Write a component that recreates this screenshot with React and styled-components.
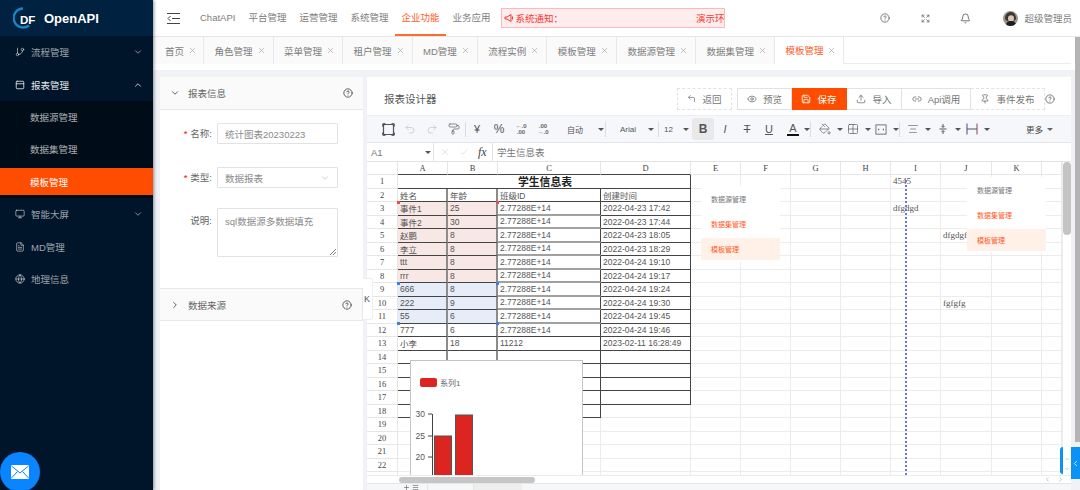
import React from 'react';
import styled, { createGlobalStyle } from 'styled-components';
import {
  GitBranch, PanelTop, ChevronDown, ChevronUp, ChevronRight, Monitor, FileText, Globe, CircleHelp, Expand, Bell,
  X, Check, Eye, Save, Upload, Link2, Pin, CornerUpLeft, Undo2, Redo2, PaintRoller,
  PaintBucket, Grid2x2, AlignCenter, Plus, Menu, ChevronLeft,
} from 'lucide-react';

const GlobalStyle = createGlobalStyle`
  html, body { margin: 0; padding: 0; height: 100%; overflow: hidden; }
  body { font-family: "Liberation Sans", "Noto Sans CJK SC", sans-serif; background: #fff; color: #666; }
  * { box-sizing: border-box; }
`;

const Page = styled.div`
  position: relative;
  display: flex;
  width: 1080px;
  height: 490px;
  overflow: hidden;
`;

/* sidebar */
const Sidebar = styled.aside`
  flex: 0 0 153px;
  background: #001529;
  box-shadow: 1px 0 3px rgba(0, 21, 41, 0.45);
  z-index: 2;
`;

const Brand = styled.div`
  display: flex;
  align-items: center;
  height: 36px;
  padding-left: 13px;
  background: #002140;
  color: #fff;
  font-size: 13px;
  font-weight: 700;
`;

const NavItem = styled.div`
  display: flex;
  align-items: center;
  gap: 6px;
  height: 32.5px;
  padding: 0 10px 0 15px;
  font-size: 9.5px;
  color: ${(p) => (p.$open ? '#e4e7ea' : 'rgba(255,255,255,.62)')};
  svg:last-child:not(:first-child) { margin-left: auto; }
`;

const SubMenu = styled.div`
  background: #000c17;
  padding-bottom: 3px;
`;

const SubItem = styled.div`
  display: flex;
  align-items: center;
  height: ${(p) => (p.$active ? '27px' : '32px')};
  margin-top: ${(p) => (p.$active ? '3px' : '0')};
  padding-left: 30px;
  font-size: 9.5px;
  color: ${(p) => (p.$active ? '#fff' : 'rgba(255,255,255,.68)')};
  background: ${(p) => (p.$active ? '#ff4d00' : 'transparent')};
`;

const Fab = styled.div`
  position: absolute;
  left: 0;
  top: 452px;
  display: flex;
  align-items: center;
  justify-content: center;
  width: 40px;
  height: 40px;
  border-radius: 50%;
  background: #0a84ff;
  z-index: 5;
`;

/* main column */
const Main = styled.div`
  flex: 1;
  display: flex;
  flex-direction: column;
  min-width: 0;
`;

const TopBar = styled.header`
  display: flex;
  align-items: center;
  height: 37px;
  padding-left: 14px;
  border-bottom: 1px solid #e6e6e6;
  background: #fff;
  font-size: 9.5px;
`;

const TopLink = styled.div`
  display: flex;
  align-items: center;
  height: 36px;
  padding: 0 6.5px;
  color: ${(p) => (p.$active ? '#ff5a1f' : '#7d7d7d')};
  border-bottom: 2px solid ${(p) => (p.$active ? '#ff6a33' : 'transparent')};
`;

const TopLinks = styled.nav`
  display: flex;
  margin-left: 13.5px;
`;

const Notice = styled.div`
  display: flex;
  align-items: center;
  justify-content: space-between;
  width: 224px;
  height: 20px;
  margin-left: 4.5px;
  padding: 0 0 0 2px;
  border: 1px solid #ffb8b8;
  background: #ffecec;
  color: #f5372f;
  overflow: hidden;
  white-space: nowrap;
`;

const NoticeText = styled.span`
  display: flex;
  align-items: center;
  gap: 1px;
`;

const TopRight = styled.div`
  display: flex;
  align-items: center;
  margin-left: auto;
  color: #666;
`;

const TopIcon = styled.span`
  display: flex;
  justify-content: center;
  width: ${(p) => p.$w}px;
  margin-left: ${(p) => p.$ml || 0}px;
`;

const UserName = styled.span`
  margin-left: 6px;
  margin-right: 8px;
  color: #7d7d7d;
  font-size: 9.5px;
`;

const TabBar = styled.div`
  display: flex;
  height: 27px;
  padding-right: 9px;
  background: #fff;
`;

const TabsRow = styled.div`
  display: flex;
  flex: 1;
  border-bottom: 1px solid #ececec;
`;

const Tab = styled.div`
  display: flex;
  align-items: center;
  gap: 4px;
  height: 27px;
  padding: 0 7px 0 10.5px;
  font-size: 9.5px;
  white-space: nowrap;
  color: ${(p) => (p.$active ? '#ff5a1f' : '#7d7d7d')};
  background: ${(p) => (p.$active ? '#fff' : '#fafafa')};
  border-right: 1px solid #e8e8e8;
  border-bottom: ${(p) => (p.$active ? '1px solid #fff' : 'none')};
  &:first-child { padding: 0 6px 0 12px; }
  svg { color: #888; }
`;

const TabGap = styled.div`
  height: 6px;
  margin-right: 9px;
  background: #fff;
`;

const Content = styled.div`
  flex: 1;
  display: flex;
  min-height: 0;
  padding: 7px 9px 0 7px;
  gap: 4px;
  background: #f0f2f5;
`;

/* left form panel */
const FormPanel = styled.section`
  position: relative;
  flex: 0 0 203px;
  background: #fff;
`;

const CollapseHead = styled.div`
  display: flex;
  align-items: center;
  gap: 8px;
  height: 33px;
  padding: 0 10px;
  font-size: 9.5px;
  color: #666;
  background: #fafafa;
  border: 1px solid #e8e8e8;
  border-width: ${(p) => (p.$last ? '1px 1px 1px 0' : '0 0 1px')};
  svg { color: #444; }
  svg:last-child { margin-left: auto; }
`;

const FormBody = styled.div`
  display: flex;
  flex-direction: column;
  gap: 23px;
  height: 178px;
  padding-top: 13px;
`;

const FormRow = styled.div`
  display: flex;
  align-items: ${(p) => (p.$top ? 'flex-start' : 'center')};
  margin-top: ${(p) => (p.$top ? '-3px' : '0')};
  font-size: 9.5px;
  color: #666;
`;

const FormLabel = styled.label`
  width: 57px;
  padding-right: 5px;
  text-align: right;
  line-height: ${(p) => (p.$top ? '26px' : '21px')};
  &::before {
    content: ${(p) => (p.$required ? '"*"' : '""')};
    color: #f00;
    margin-right: 3px;
  }
`;

const Field = styled.div`
  position: relative;
  display: flex;
  align-items: ${(p) => (p.$area ? 'flex-start' : 'center')};
  justify-content: space-between;
  width: 121px;
  height: ${(p) => (p.$area ? '49px' : '21px')};
  padding: ${(p) => (p.$area ? '5px 7px' : '0 7px')};
  border: 1px solid #e2e2e2;
  border-radius: 1px;
  color: #8a8a8a;
  font-size: 9.5px;
`;

const Grip = styled.span`
  position: absolute;
  right: 1px;
  bottom: 1px;
  width: 6px;
  height: 6px;
  background: linear-gradient(135deg, transparent 45%, #888 45%, #888 55%, transparent 55%, transparent 70%, #888 70%, #888 80%, transparent 80%);
`;

const CollapseHandle = styled.div`
  position: absolute;
  left: 203px;
  top: 201px;
  display: flex;
  align-items: center;
  width: 10px;
  height: 42px;
  padding-left: 1px;
  background: #fff;
  border: 1px solid #eee;
  border-left: none;
  border-radius: 0 3px 3px 0;
  font-size: 9px;
  color: #555;
  z-index: 3;
`;

/* designer panel */
const Designer = styled.section`
  flex: 1;
  display: flex;
  flex-direction: column;
  min-width: 0;
  background: #fff;
`;

const DesignerHead = styled.div`
  display: flex;
  align-items: center;
  height: 38px;
  padding: 5px 16px 0 17px;
  flex: none;
`;

const DesignerTitle = styled.h2`
  margin: 0;
  font-size: 10.5px;
  font-weight: 400;
  color: #555;
`;

const ActionGroup = styled.div`
  display: flex;
  align-items: center;
  margin-left: auto;
`;

const ActionButton = styled.div`
  display: flex;
  align-items: center;
  justify-content: center;
  gap: 6px;
  width: ${(p) => p.$w}px;
  height: 22px;
  margin-left: ${(p) => p.$ml || 0}px;
  font-size: 9.5px;
  color: ${(p) => (p.$primary ? '#fff' : '#777')};
  background: ${(p) => (p.$primary ? '#ff4d00' : '#fff')};
  border: 1px ${(p) => (p.$dashed ? 'dashed' : 'solid')} ${(p) => (p.$primary ? '#ff4d00' : '#e2e2e2')};
  border-left-width: ${(p) => (p.$joined ? 0 : 1)}px;
`;

const HelpSlot = styled.span`
  display: flex;
  color: #666;
`;

const Toolbar = styled.div`
  display: flex;
  align-items: center;
  flex: none;
  height: 28px;
  padding: 0 18px 0 10px;
  background: #f6f7fb;
  border-top: 1px solid #eceef2;
  border-bottom: 1px solid #e2e4e8;
  color: #555;
`;

const ToolButton = styled.div`
  display: flex;
  align-items: center;
  justify-content: center;
  flex: none;
  width: 22px;
  height: 22px;
  font-size: ${(p) => p.$size || 11}px;
  font-weight: ${(p) => (p.$bold ? 700 : 400)};
  font-style: ${(p) => (p.$italic ? 'italic' : 'normal')};
  color: ${(p) => (p.$muted ? '#bbb' : '#555')};
  background: ${(p) => (p.$on ? '#e9e9ec' : 'transparent')};
  border-radius: 3px;
  text-decoration: ${(p) => p.$line || 'none'};
`;

const DropButton = styled.div`
  display: flex;
  align-items: center;
  flex: none;
  gap: ${(p) => p.$gap ?? 6}px;
  width: ${(p) => p.$w}px;
  padding-left: ${(p) => p.$pad || 0}px;
  font-size: 8px;
  color: #555;
`;

const Caret = styled.i`
  flex: none;
  width: 0;
  height: 0;
  border-left: 3px solid transparent;
  border-right: 3px solid transparent;
  border-top: 3px solid ${(p) => p.$color || '#555'};
`;

const ToolSep = styled.span`
  flex: none;
  width: 1px;
  height: 15px;
  background: #dcdde0;
`;

const TwoLine = styled.span`
  display: flex;
  flex-direction: column;
  align-items: center;
  font-size: 6px;
  line-height: 6.5px;
  font-weight: 700;
  color: #666;
`;

const FontColor = styled.span`
  display: flex;
  flex-direction: column;
  align-items: center;
  width: 12px;
  font-size: 11px;
  line-height: 11px;
  border-bottom: 2px solid #111;
`;

const MoreLabel = styled.div`
  display: flex;
  align-items: center;
  gap: 4px;
  margin-left: auto;
  font-size: 8.5px;
  color: #444;
`;

const FormulaBar = styled.div`
  display: flex;
  align-items: center;
  flex: none;
  height: 19px;
  border-bottom: 1px solid #e4e4e4;
  font-size: 9.5px;
  color: #777;
`;

const CellName = styled.div`
  display: flex;
  align-items: center;
  justify-content: space-between;
  width: 67px;
  height: 100%;
  padding: 0 2px 0 4px;
  border-right: 1px solid #e4e4e4;
`;

const FormulaIcons = styled.div`
  display: flex;
  align-items: center;
  gap: 9px;
  width: 59px;
  height: 100%;
  padding-left: 6px;
  border-right: 1px solid #e4e4e4;
  color: #ccc;
`;

const Fx = styled.span`
  color: #444;
  font-family: "Liberation Serif", serif;
  font-style: italic;
  font-size: 12px;
`;

const FormulaText = styled.div`
  padding-left: 4px;
  color: #777;
`;

/* sheet */
const SheetWrap = styled.div`
  position: relative;
  flex: none;
  height: 313px;
  overflow: hidden;
`;

const SheetGrid = styled.div`
  display: grid;
  grid-template-columns: 31px 50px 50px 103px 90px 50px 50px 50px 50px 50px 51px 50px 20px;
  grid-template-rows: 13px repeat(23, 13.5px);
  width: 695px;
`;

const HeadCell = styled.div`
  display: flex;
  align-items: center;
  justify-content: center;
  font-family: "Liberation Serif", serif;
  font-size: 8.5px;
  color: #444;
  background: #fff;
  border-right: 1px solid #e6e6e6;
  border-bottom: 1px solid ${(p) => (p.$edge ? '#444' : '#e6e6e6')};
`;

const Cell = styled.div`
  grid-column: span ${(p) => p.$span || 1};
  display: flex;
  align-items: center;
  justify-content: ${(p) => (p.$center ? 'center' : 'flex-start')};
  min-width: 0;
  padding-left: 2px;
  white-space: nowrap;
  font-family: ${(p) => (p.$serif ? '"Liberation Serif", serif' : 'inherit')};
  font-size: ${(p) => p.$font || 8.5}px;
  font-weight: ${(p) => (p.$bold ? 700 : 400)};
  color: ${(p) => (p.$bold ? '#222' : '#555')};
  background: ${(p) => p.$bg || 'transparent'};
  border-right: ${(p) => p.$right || '1px solid #ececec'};
  border-bottom: ${(p) => p.$bottom || '1px solid #ececec'};
`;

const Handle = styled.i`
  position: absolute;
  left: ${(p) => p.$x}px;
  top: ${(p) => p.$y}px;
  width: 3px;
  height: 3px;
  background: ${(p) => p.$color};
`;

const GuideLine = styled.div`
  position: absolute;
  left: 538px;
  top: 18px;
  bottom: 0;
  border-left: 2px dotted #7070f5;
`;

const FloatMenu = styled.div`
  position: absolute;
  left: ${(p) => p.$x}px;
  top: ${(p) => p.$y}px;
  display: flex;
  flex-direction: column;
  gap: 3px;
  width: 79px;
  padding: 2px 0;
  background: #fff;
`;

const FloatItem = styled.div`
  display: flex;
  align-items: center;
  height: 22px;
  padding-left: 10px;
  font-size: 7px;
  color: ${(p) => (p.$tone === 'plain' ? '#777' : '#ff5a1f')};
  background: ${(p) => (p.$tone === 'active' ? '#fff0e8' : 'transparent')};
`;

const ChartCard = styled.div`
  position: absolute;
  left: 43px;
  top: 198px;
  width: 173px;
  height: 130px;
  background: #fff;
  border: 1px solid #c4c4c4;
`;

const VScroll = styled.div`
  position: absolute;
  right: 0;
  top: 0;
  bottom: 0;
  width: 9px;
  background: #fff;
  border-left: 1px solid #ececec;
`;

const VThumb = styled.div`
  width: 8px;
  height: 73px;
  border-radius: 4px;
  background: #c4c4c4;
`;

const HScroll = styled.div`
  display: flex;
  align-items: center;
  flex: none;
  height: 8px;
  padding: 0 4px 0 32px;
  background: #fff;
  border-top: 1px solid #ececec;
  color: #999;
`;

const HThumb = styled.div`
  width: 136px;
  height: 6px;
  margin-right: auto;
  border-radius: 3px;
  background: #c6c6c6;
`;

const ScrollArrow = styled.span`
  display: flex;
  justify-content: center;
  width: 13px;
`;

const SheetTabs = styled.div`
  display: flex;
  align-items: center;
  flex: 1;
  gap: 2px;
  padding-left: 36px;
  background: #f6f7f9;
  border-top: 1px solid #e6e6e6;
  color: #555;
`;

const SheetTab = styled.div`
  align-self: stretch;
  width: ${(p) => p.$w}px;
  margin-left: ${(p) => p.$ml || 0}px;
  background: ${(p) => p.$bg};
  border-left: 1px solid #e6e6e6;
`;

const PageScroll = styled.div`
  position: absolute;
  right: 0;
  top: 37px;
  width: 5px;
  height: 405px;
  background: #b4b4b4;
`;

const SideWidget = styled.div`
  position: absolute;
  right: 0;
  top: 447px;
  display: flex;
  align-items: center;
  justify-content: center;
  width: 9px;
  height: 32px;
  background: #0a92f5;
  color: #fff;
  overflow: hidden;
  z-index: 4;
`;

const StepStrip = styled.div`
  position: absolute;
  left: 693px;
  top: 285px;
  display: flex;
  flex-direction: column;
  align-items: center;
  justify-content: space-around;
  width: 11px;
  height: 27px;
  padding-top: 7px;
  background: #fff;
  border-left: 3px solid #0a92f5;
  border-radius: 3px 0 0 3px;
  color: #999;
`;

const Avatar = () => (
  <svg width="15" height="15" viewBox="0 0 15 15">
    <defs><clipPath id="av"><circle cx="7.5" cy="7.5" r="7.5" /></clipPath></defs>
    <g clipPath="url(#av)">
      <rect width="15" height="15" fill="#9b9590" />
      <path d="M2 8c0-5 3-7 6-7s5 3 5 7l-2 2H4z" fill="#3e3530" />
      <ellipse cx="8" cy="7.5" rx="3" ry="3.2" fill="#d9c7b8" />
      <path d="M3 15c0-4 2-5 5-5s5 1 5 5z" fill="#1e1e22" />
    </g>
  </svg>
);

const Logo = () => (
  <svg width="31" height="24" viewBox="0 0 31 24">
    <path d="M10 2.5a9.5 9.5 0 1 0 6 17" fill="none" stroke="#1586c8" strokeWidth="2.4" />
    <text x="7" y="18" fontSize="11.5" fontWeight="700" fill="#fff" fontFamily="Liberation Sans, sans-serif">DF</text>
  </svg>
);

const MailIcon = () => (
  <svg width="18" height="14" viewBox="0 0 18 14">
    <rect width="18" height="14" rx="1" fill="#fff" />
    <path d="M.5 1 9 8l8.500-7M.5 13l6-6.500M17.500 13l-6-6.500" fill="none" stroke="#0a84ff" strokeWidth="1" />
  </svg>
);

const CollapseIcon = () => (
  <svg width="13" height="11" viewBox="0 0 13 11" fill="none" stroke="#444" strokeWidth="1">
    <path d="M0 .5h13M0 10.500h13M5 5.500h8" />
    <path d="M3.500 3 1 5.500 3.500 8" />
  </svg>
);

const FitIcon = () => (
  <svg width="13" height="13" viewBox="0 0 13 13" fill="none">
    <rect x="1.500" y="1.500" width="10" height="10" rx="1" stroke="#5c4f66" strokeWidth="1.200" />
    <path d="M.8 3.500V.8h2.700M9.500.8h2.700v2.700M12.200 9.500v2.700H9.500M3.500 12.200H.8V9.500" stroke="#333" />
  </svg>
);

const MergeIcon = () => (
  <svg width="13" height="13" viewBox="0 0 13 13" fill="none">
    <rect x="1" y="1.5" width="11" height="10" stroke="#77607a" />
    <path d="M3.5 6.5h1M8.5 6.5h1" stroke="#333" strokeWidth="1.4" />
  </svg>
);

const VAlignIcon = () => (
  <svg width="12" height="12" viewBox="0 0 12 12" fill="none" stroke="#555">
    <path d="M2.5 6h7M6 1v3M6 8v3M4.5 3 6 4.5 7.5 3M4.5 9 6 7.5 7.5 9" />
  </svg>
);

const WrapIcon = () => (
  <svg width="12" height="12" viewBox="0 0 12 12" fill="none">
    <path d="M1 .5v11" stroke="#5a3c8c" />
    <path d="M11 .5v11" stroke="#7a4a6a" />
    <path d="M1 6h10" stroke="#555" />
  </svg>
);

const BorderIcon = () => <Grid2x2 size={12} strokeWidth={1.2} color="#444" />;

const topLinks = ['ChatAPI', '平台管理', '运营管理', '系统管理', '企业功能', '业务应用'];
const tabs = ['首页', '角色管理', '菜单管理', '租户管理', 'MD管理', '流程实例', '模板管理', '数据源管理', '数据集管理', '模板管理'];

const rows = [
  ['姓名', '年龄', '班级ID', '创建时间'],
  ['事件1', '25', '2.77288E+14', '2022-04-23 17:42'],
  ['事件2', '30', '2.77288E+14', '2022-04-23 17:44'],
  ['赵鹏', '8', '2.77288E+14', '2022-04-23 18:05'],
  ['李立', '8', '2.77288E+14', '2022-04-23 18:29'],
  ['ttt', '8', '2.77288E+14', '2022-04-24 19:10'],
  ['rrr', '8', '2.77288E+14', '2022-04-24 19:17'],
  ['666', '8', '2.77288E+14', '2022-04-24 19:24'],
  ['222', '9', '2.77288E+14', '2022-04-24 19:30'],
  ['55', '6', '2.77288E+14', '2022-04-24 19:45'],
  ['777', '6', '2.77288E+14', '2022-04-24 19:46'],
  ['小李', '18', '11212', '2023-02-11 16:28:49'],
];

// stray values typed outside the table
const freeCells = { '1-8': '4545', '3-8': 'dfgdgd', '5-9': 'dfgdgf', '10-9': 'fgfgfg' };
const colNames = ['A', 'B', 'C', 'D', 'E', 'F', 'G', 'H', 'I', 'J', 'K', ''];
const dark = '1px solid #444';

const fillFor = (r, c) => {
  if (c > 1) return undefined;
  if (r >= 3 && r <= 8) return '#f8e8e5';
  if (r >= 9 && r <= 11) return '#e6edf8';
  return undefined;
};

const tableCell = (r, c) => {
  const inTable = r <= 17 || (r === 18 && c <= 2);
  if (!inTable) return {};
  let right = dark;
  let bottom = dark;
  if (c < 2 && r >= 2 && r <= 14) right = '2px solid #8c8c8c';
  if (c === 2 && r >= 3 && r <= 11) bottom = '2px solid #a0a0a0';
  return { $right: right, $bottom: bottom };
};

const renderRow = (r) => {
  const out = [<HeadCell key={`h${r}`}>{r <= 22 ? r : ''}</HeadCell>];
  if (r === 1) {
    out.push(<Cell key="title" $span={4} $center $bold $font={10.8} $bottom={dark} $right={dark}>学生信息表</Cell>);
  }
  for (let c = r === 1 ? 4 : 0; c < 12; c++) {
    const data = c < 4 ? rows[r - 2]?.[c] : undefined;
    const free = freeCells[`${r}-${c}`];
    const styleProps = c < 4 ? tableCell(r, c) : {};
    out.push(
      <Cell key={`${r}-${c}`} $bg={fillFor(r, c)} $serif={!!free} $font={free ? 9 : 8.5} {...styleProps}>
        {data || free || ''}
      </Cell>
    );
  }
  return out;
};

const handles = [
  [30, 39, '#e25050'], [129, 39, '#e25050'],
  [30, 120, '#3f7fe0'], [129, 120, '#3f7fe0'],
  [30, 160, '#3f7fe0'], [129, 160, '#3f7fe0'],
];

const floatMenus = [{ x: 334, y: 24 }, { x: 600, y: 15 }];

export default function App() {
  return (
    <Page>
      <GlobalStyle />
      <Sidebar>
        <Brand><Logo />OpenAPI</Brand>
        <NavItem><GitBranch size={10} /><span>流程管理</span><ChevronDown size={10} /></NavItem>
        <NavItem $open><PanelTop size={10} /><span>报表管理</span><ChevronUp size={10} /></NavItem>
        <SubMenu>
          <SubItem>数据源管理</SubItem>
          <SubItem>数据集管理</SubItem>
          <SubItem $active>模板管理</SubItem>
        </SubMenu>
        <NavItem><Monitor size={10} /><span>智能大屏</span><ChevronDown size={10} /></NavItem>
        <NavItem><FileText size={10} /><span>MD管理</span></NavItem>
        <NavItem><Globe size={10} /><span>地理信息</span></NavItem>
      </Sidebar>
      <Fab><MailIcon /></Fab>

      <Main>
        <TopBar>
          <CollapseIcon />
          <TopLinks>
            {topLinks.map((t) => <TopLink key={t} $active={t === '企业功能'}>{t}</TopLink>)}
          </TopLinks>
          <Notice>
            <NoticeText>
              <svg width="10" height="10" viewBox="0 0 10 10" fill="none" stroke="#f5372f"><path d="M1 4v2h2l4 2.5v-7L3 4zM8.5 3.500v3" /></svg>
              系统通知：
            </NoticeText>
            <span>演示环</span>
          </Notice>
          <TopRight>
            <TopIcon $w={40}><CircleHelp size={10} /></TopIcon>
            <TopIcon $w={40}><Expand size={9} /></TopIcon>
            <TopIcon $w={40}><Bell size={11} /></TopIcon>
            <TopIcon $w={16} $ml={17}><Avatar /></TopIcon>
            <UserName>超级管理员</UserName>
          </TopRight>
        </TopBar>

        <TabBar>
          <TabsRow>
            {tabs.map((t, i) => (
              <Tab key={i} $active={i === tabs.length - 1}>{t}<X size={9} strokeWidth={1.3} /></Tab>
            ))}
          </TabsRow>
        </TabBar>
        <TabGap />

        <Content>
          <FormPanel>
            <CollapseHead><ChevronDown size={10} /><span>报表信息</span><CircleHelp size={10} /></CollapseHead>
            <FormBody>
              <FormRow>
                <FormLabel $required>名称:</FormLabel>
                <Field>统计图表20230223</Field>
              </FormRow>
              <FormRow>
                <FormLabel $required>类型:</FormLabel>
                <Field>数据报表<ChevronDown size={10} strokeWidth={1} /></Field>
              </FormRow>
              <FormRow $top>
                <FormLabel $top>说明:</FormLabel>
                <Field $area>sql数据源多数据填充<Grip /></Field>
              </FormRow>
            </FormBody>
            <CollapseHead $last><ChevronRight size={10} /><span>数据来源</span><CircleHelp size={10} /></CollapseHead>
            <CollapseHandle>K</CollapseHandle>
          </FormPanel>

          <Designer>
            <DesignerHead>
              <DesignerTitle>报表设计器</DesignerTitle>
              <ActionGroup>
                <ActionButton $w={55} $dashed><CornerUpLeft size={9} />返回</ActionButton>
                <ActionButton $w={55} $ml={5}><Eye size={10} />预览</ActionButton>
                <ActionButton $w={55} $primary $joined><Save size={10} />保存</ActionButton>
                <ActionButton $w={55} $joined><Upload size={10} />导入</ActionButton>
                <ActionButton $w={69} $joined><Link2 size={10} />Api调用</ActionButton>
                <ActionButton $w={74} $dashed $joined><Pin size={10} />事件发布</ActionButton>
                <HelpSlot><CircleHelp size={10} /></HelpSlot>
              </ActionGroup>
            </DesignerHead>

            <Toolbar>
              <ToolButton><FitIcon /></ToolButton>
              <ToolButton $muted><Undo2 size={12} strokeWidth={1.2} /></ToolButton>
              <ToolButton $muted><Redo2 size={12} strokeWidth={1.2} /></ToolButton>
              <ToolButton><PaintRoller size={12} strokeWidth={1.3} /></ToolButton>
              <ToolSep />
              <ToolButton>¥</ToolButton>
              <ToolButton $size={12}>%</ToolButton>
              <ToolButton><TwoLine><span>←.0</span><span>.00</span></TwoLine></ToolButton>
              <ToolButton><TwoLine><span>.00</span><span>→.0</span></TwoLine></ToolButton>
              <DropButton $w={51} $pad={13} $gap={15}><span>自动</span><Caret /></DropButton>
              <ToolSep />
              <DropButton $w={52} $pad={14} $gap={12}><span>Arial</span><Caret /></DropButton>
              <ToolSep />
              <DropButton $w={33} $pad={5} $gap={10}><span>12</span><Caret /></DropButton>
              <ToolButton $on $bold $size={12}>B</ToolButton>
              <ToolButton $italic>I</ToolButton>
              <ToolButton $line="line-through">T</ToolButton>
              <ToolButton $line="underline">U</ToolButton>
              <DropButton $w={30} $pad={7} $gap={5}><FontColor>A</FontColor><Caret /></DropButton>
              <ToolSep />
              <DropButton $w={33} $pad={8}><PaintBucket size={12} strokeWidth={1.3} /><Caret /></DropButton>
              <DropButton $w={27} $pad={3}><BorderIcon /><Caret /></DropButton>
              <DropButton $w={28} $pad={4}><MergeIcon /><Caret /></DropButton>
              <ToolSep />
              <DropButton $w={31} $pad={7}><AlignCenter size={12} strokeWidth={1.2} /><Caret /></DropButton>
              <DropButton $w={30} $pad={6}><VAlignIcon /><Caret /></DropButton>
              <DropButton $w={30} $pad={5}><WrapIcon /><Caret /></DropButton>
              <MoreLabel>更多<Caret $color="#666" /></MoreLabel>
            </Toolbar>

            <FormulaBar>
              <CellName>A1<Caret /></CellName>
              <FormulaIcons><X size={10} strokeWidth={1.4} /><Check size={10} strokeWidth={1.4} /><Fx>fx</Fx></FormulaIcons>
              <FormulaText>学生信息表</FormulaText>
            </FormulaBar>

            <SheetWrap>
              <SheetGrid>
                <HeadCell />
                {colNames.map((n, i) => <HeadCell key={i} $edge={i < 4}>{n}</HeadCell>)}
                {Array.from({ length: 23 }, (_, i) => renderRow(i + 1))}
              </SheetGrid>

              {handles.map(([x, y, color], i) => <Handle key={i} $x={x} $y={y} $color={color} />)}
              <GuideLine />

              {floatMenus.map((m, i) => (
                <FloatMenu key={i} $x={m.x} $y={m.y}>
                  <FloatItem $tone="plain">数据源管理</FloatItem>
                  <FloatItem $tone="hot">数据集管理</FloatItem>
                  <FloatItem $tone="active">模板管理</FloatItem>
                </FloatMenu>
              ))}

              <ChartCard>
                <svg width="171" height="128" viewBox="0 0 171 128" fontFamily="Liberation Sans, Noto Sans CJK SC, sans-serif">
                  <rect x="9" y="17" width="17" height="9" rx="2" fill="#dc2421" />
                  <text x="29" y="24.5" fontSize="8" fill="#666">系列1</text>
                  <path d="M21.500 53v75M17 53h4M17 75h4M17 96h4M17 117h4" stroke="#444" fill="none" />
                  <text x="14" y="56" fontSize="8.5" fill="#555" textAnchor="end">30</text>
                  <text x="14" y="78" fontSize="8.5" fill="#555" textAnchor="end">25</text>
                  <text x="14" y="99" fontSize="8.5" fill="#555" textAnchor="end">20</text>
                  <text x="14" y="120" fontSize="8.5" fill="#555" textAnchor="end">15</text>
                  <rect x="23.5" y="75" width="17" height="60" fill="#dc2421" stroke="#555" />
                  <rect x="44.5" y="54" width="17" height="80" fill="#dc2421" stroke="#555" />
                </svg>
              </ChartCard>

              <VScroll><VThumb /></VScroll>
              <StepStrip><ChevronUp size={6} /><ChevronDown size={6} /></StepStrip>
            </SheetWrap>

            <HScroll>
              <HThumb />
              <ScrollArrow><ChevronLeft size={7} /></ScrollArrow>
              <ScrollArrow><ChevronRight size={7} /></ScrollArrow>
            </HScroll>
            <SheetTabs>
              <Plus size={7} /><Menu size={7} />
              <SheetTab $w={44} $ml={6} $bg="#f6f7f9" />
              <SheetTab $w={49} $bg="#eeeeee" />
            </SheetTabs>
          </Designer>
        </Content>
      </Main>

      <PageScroll />
      <SideWidget><ChevronLeft size={9} /></SideWidget>
    </Page>
  );
}
